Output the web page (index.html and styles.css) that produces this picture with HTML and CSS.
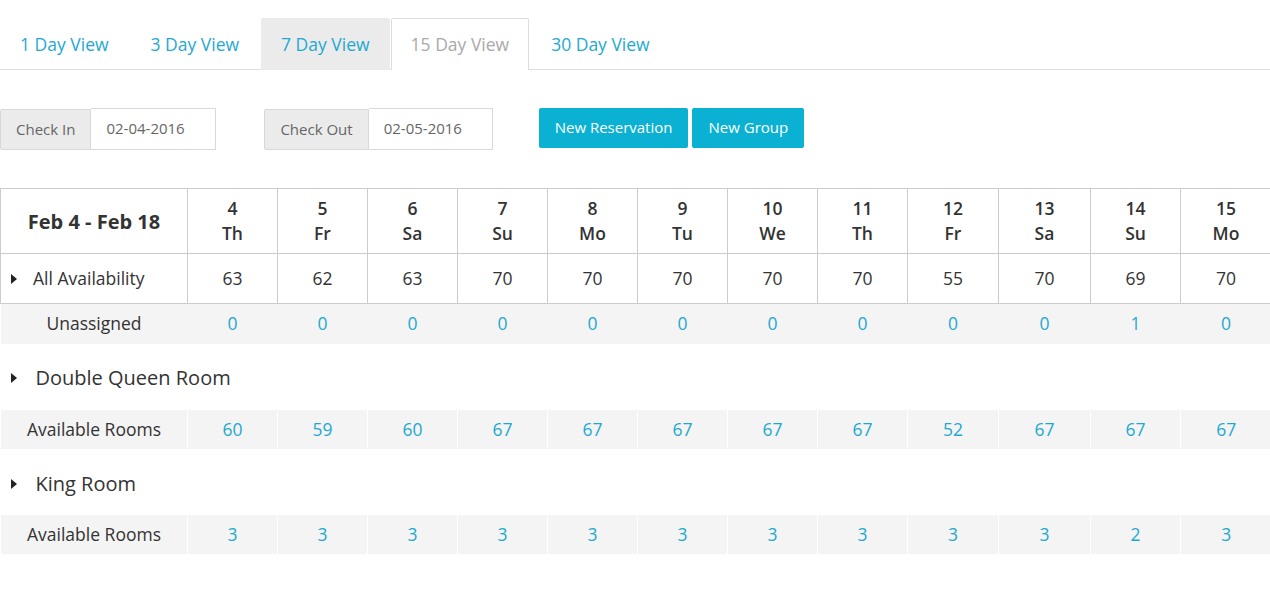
FILE: index.html
```html
<!DOCTYPE html>
<html>
<head>
<meta charset="utf-8">
<link rel="stylesheet" href="styles.css">
</head>
<body>
<ul class="tabs">
  <li class="tab"><a>1 Day View</a></li>
  <li class="tab"><a>3 Day View</a></li>
  <li class="tab hover"><a>7 Day View</a></li>
  <li class="tab active"><a>15 Day View</a></li>
  <li class="tab"><a>30 Day View</a></li>
</ul>
<div class="toolbar">
  <div class="input-group">
    <span class="addon">Check In</span>
    <span class="field">02-04-2016</span>
  </div>
  <div class="input-group out">
    <span class="addon">Check Out</span>
    <span class="field">02-05-2016</span>
  </div>
  <div class="buttons">
    <button class="btn">New Reservation</button>
    <button class="btn">New Group</button>
  </div>
</div>
<table class="grid">
  <colgroup>
    <col class="c-first">
    <col><col><col><col><col><col><col><col>
    <col class="c-91"><col class="c-92"><col><col class="c-last">
  </colgroup>
  <tr class="head">
    <th class="range">Feb 4 - Feb 18</th>
    <th>4<br>Th</th><th>5<br>Fr</th><th>6<br>Sa</th><th>7<br>Su</th><th>8<br>Mo</th><th>9<br>Tu</th><th>10<br>We</th><th>11<br>Th</th><th>12<br>Fr</th><th>13<br>Sa</th><th>14<br>Su</th><th>15<br>Mo</th>
  </tr>
  <tr class="avail">
    <td class="label"><span class="caret"></span>All Availability</td>
    <td>63</td><td>62</td><td>63</td><td>70</td><td>70</td><td>70</td><td>70</td><td>70</td><td>55</td><td>70</td><td>69</td><td>70</td>
  </tr>
  <tr class="unassigned">
    <td class="center">Unassigned</td>
    <td>0</td><td>0</td><td>0</td><td>0</td><td>0</td><td>0</td><td>0</td><td>0</td><td>0</td><td>0</td><td>1</td><td>0</td>
  </tr>
  <tr class="room">
    <td colspan="13"><span class="caret"></span>Double Queen Room</td>
  </tr>
  <tr class="rooms">
    <td class="center">Available Rooms</td>
    <td>60</td><td>59</td><td>60</td><td>67</td><td>67</td><td>67</td><td>67</td><td>67</td><td>52</td><td>67</td><td>67</td><td>67</td>
  </tr>
  <tr class="room">
    <td colspan="13"><span class="caret"></span>King Room</td>
  </tr>
  <tr class="rooms">
    <td class="center">Available Rooms</td>
    <td>3</td><td>3</td><td>3</td><td>3</td><td>3</td><td>3</td><td>3</td><td>3</td><td>3</td><td>3</td><td>2</td><td>3</td>
  </tr>
</table>
</body>
</html>
```

FILE: styles.css
```css
* { box-sizing: border-box; }
body {
  margin: 0;
  font-family: "Open Sans", "Liberation Sans", sans-serif;
  color: #333;
  background: #fff;
}
.tabs {
  list-style: none;
  margin: 0;
  padding: 18px 0 0;
  display: flex;
  border-bottom: 1px solid #ddd;
}
.tab {
  margin-right: 2px;
  margin-bottom: -1px;
}
.tab a {
  display: block;
  height: 52px;
  padding: 0 19px;
  line-height: 51px;
  font-size: 17.5px;
  color: #1fa9d1;
  border: 1px solid transparent;
  border-bottom: 0;
}
.tab.hover { margin-right: 1px; }
.tab.hover a {
  background: #ebebeb;
  border-radius: 2px 2px 0 0;
}
.tab.active a {
  background: #fff;
  color: #a9a9a9;
  border-color: #ddd;
  border-radius: 2px 2px 0 0;
}
.toolbar {
  display: flex;
  align-items: flex-start;
  margin-top: 38px;
  font-size: 15px;
}
.input-group {
  display: flex;
  height: 42px;
  margin-right: 48px;
}
.input-group.out { margin-right: 46px; }
.addon {
  display: flex;
  align-items: center;
  padding: 0 15px 2px;
  background: #ebebeb;
  border: 1px solid #d9d9d9;
  border-radius: 2px 0 0 2px;
  color: #666;
  margin-top: 1px;
}
.field {
  display: flex;
  align-items: center;
  width: 125px;
  padding: 0 15px 2px;
  border: 1px solid #d9d9d9;
  border-left: 0;
  color: #666;
}
.out .field { width: 124px; }
.buttons { display: flex; gap: 4px; }
.btn {
  height: 40px;
  padding: 0 16px 2px;
  border: 0;
  border-radius: 2px;
  background: #0bb1d3;
  color: #fff;
  font-family: inherit;
  font-size: 15px;
}
.grid {
  margin-top: 38px;
  width: 1271px;
  table-layout: fixed;
  border-collapse: collapse;
  font-size: 17.5px;
}
.grid col { width: 90px; }
.grid col.c-first { width: 187px; }
.grid col.c-91 { width: 91px; }
.grid col.c-92 { width: 92px; }
.grid col.c-last { width: 91px; }
.grid th, .grid td {
  padding: 0;
  text-align: center;
}
.head th {
  height: 65px;
  border: 1px solid #ccc;
  font-weight: 600;
  line-height: 25px;
  color: #333;
}
.head th.range {
  font-size: 20px;
  font-weight: 700;
}
.avail td {
  height: 50px;
  border: 1px solid #ccc;
  padding-bottom: 1px;
}
.label { text-align: left !important; padding-left: 10px !important; }
.caret {
  display: inline-block;
  width: 0;
  height: 0;
  border-left: 6px solid #222;
  border-top: 5px solid transparent;
  border-bottom: 5px solid transparent;
  margin-right: 16px;
  vertical-align: 1px;
}
.unassigned td {
  height: 40px;
  background: #f4f4f4;
  color: #1fa9d1;
  padding-bottom: 1px;
}
.unassigned td.center, .rooms td.center { color: #333; }
.room td {
  height: 66px;
  text-align: left;
  padding-left: 10px;
  padding-top: 1px;
  font-size: 20px;
}
.room + .rooms + .room td { padding-top: 3px; }
.room .caret { margin-right: 19px; vertical-align: 2px; }
.rooms td {
  height: 39px;
  background: #f4f4f4;
  color: #1fa9d1;
  border-left: 1px solid #fff;
}
```
